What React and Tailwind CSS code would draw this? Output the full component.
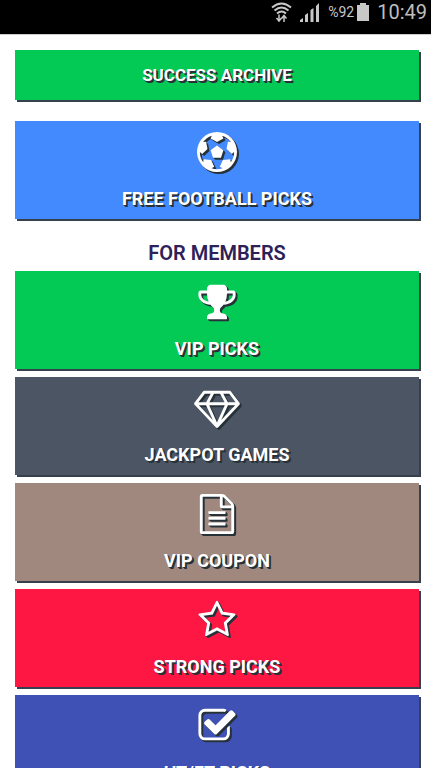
const ICONS = {
  ball: {
    box: '0 0 1792 1792',
    size: 'w-10 h-10',
    d: 'M609 816l287-208 287 208-109 336h-355zm287-816q182 0 348 71t286 191 191 286 71 348-71 348-191 286-286 191-348 71-348-71-286-191-191-286-71-348 71-348 191-286 286-191 348-71zm619 1350q149-203 149-454v-3l-102 89-240-224 63-323 134 12q-150-206-389-282l53 124-287 159-287-159 53-124q-239 76-389 282l135-12 62 323-240 224-102-89v3q0 251 149 454l30-132 326 40 139 298-116 69q117 39 240 39t240-39l-115-69 139-298 326-40z',
  },
  trophy: {
    box: '0 0 1792 1792',
    size: 'w-10 h-10',
    d: 'M522 883q-74-162-74-371h-256v96q0 78 94.5 162t235.5 113zm1078-275v-96h-256q0 209-74 371 141-29 235.5-113t94.5-162zm128-128v128q0 71-41.5 143t-112 130-173 97.5-215.5 44.5q-42 54-95 95-38 34-52.5 72.5t-14.5 89.5q0 54 30.5 91t97.5 37q75 0 133.5 45.5t58.5 114.5v64q0 14-9 23t-23 9h-832q-14 0-23-9t-9-23v-64q0-69 58.5-114.5t133.5-45.5q67 0 97.5-37t30.5-91q0-51-14.5-89.5t-52.5-72.5q-53-41-95-95-113-5-215.5-44.5t-173-97.5-112-130-41.5-143v-128q0-40 28-68t68-28h288v-96q0-66 47-113t113-47h576q66 0 113 47t47 113v96h288q40 0 68 28t28 68z',
  },
  diamond: {
    box: '0 0 2048 1792',
    size: 'w-[46px] h-10',
    d: 'M212 768l623 665-300-665h-323zm812 772l349-772h-698zm-486-900l204-384h-262l-288 384h346zm675 793l623-665h-323zm-530-793h682l-204-384h-274zm827 0h346l-288-384h-262zm141-486l384 512q14 18 13 41.5t-17 40.5l-960 1024q-18 20-47 20t-47-20l-960-1024q-16-17-17-40.5t13-41.5l384-512q18-26 51-26h1152q33 0 51 26z',
  },
  file: {
    box: '0 0 1792 1792',
    size: 'w-10 h-10',
    d: 'M1596 380q28 28 48 76t20 88v1152q0 40-28 68t-68 28h-1344q-40 0-68-28t-28-68v-1600q0-40 28-68t68-28h896q40 0 88 20t76 48zm-444-244v376h376q-10-29-22-41l-313-313q-12-12-41-22zm384 1528v-1024h-416q-40 0-68-28t-28-68v-416h-768v1536h1280zm-1024-864q0-14 9-23t23-9h704q14 0 23 9t9 23v64q0 14-9 23t-23 9h-704q-14 0-23-9t-9-23v-64zm736 224q14 0 23 9t9 23v64q0 14-9 23t-23 9h-704q-14 0-23-9t-9-23v-64q0-14 9-23t23-9h704zm0 256q14 0 23 9t9 23v64q0 14-9 23t-23 9h-704q-14 0-23-9t-9-23v-64q0-14 9-23t23-9h704z',
  },
  star: {
    box: '0 0 1792 1792',
    size: 'w-10 h-10',
    d: 'M1201 1004l306-297-422-62-189-382-189 382-422 62 306 297-73 421 378-199 377 199zm527-357q0 22-26 48l-363 354 86 500q1 7 1 20 0 50-41 50-19 0-40-12l-449-236-449 236q-22 12-40 12-21 0-31.5-14.5t-10.5-35.5q0-6 2-20l86-500-364-354q-25-27-25-48 0-37 56-46l502-73 225-455q19-41 49-41t49 41l225 455 502 73q56 9 56 46z',
  },
  check: {
    box: '0 0 1792 1792',
    size: 'w-10 h-10',
    d: 'M1472 930v318q0 119-84.5 203.5t-203.5 84.5h-832q-119 0-203.5-84.5t-84.5-203.5v-832q0-119 84.5-203.5t203.5-84.5h832q63 0 117 25 15 7 18 23 3 17-9 29l-49 49q-10 10-23 10-3 0-9-2-23-6-45-6h-832q-66 0-113 47t-47 113v832q0 66 47 113t113 47h832q66 0 113-47t47-113v-254q0-13 9-22l64-64q10-10 23-10 6 0 12 3 20 8 20 29zm231-489l-814 814q-24 24-57 24t-57-24l-430-430q-24-24-24-57t24-57l110-110q24-24 57-24t57 24l263 263 647-647q24-24 57-24t57 24l110 110q24 24 24 57t-24 57z',
  },
};

const memberCards = [
  { label: 'VIP PICKS', icon: 'trophy', bg: 'bg-[#03c955]' },
  { label: 'JACKPOT GAMES', icon: 'diamond', bg: 'bg-[#4b5563]' },
  { label: 'VIP COUPON', icon: 'file', bg: 'bg-[#a1887f]' },
  { label: 'STRONG PICKS', icon: 'star', bg: 'bg-[#ff1744]' },
  { label: 'HT/FT PICKS', icon: 'check', bg: 'bg-[#3f51b5]' },
];

const textShadow = '[text-shadow:1px_1px_0_#263238,2px_2px_0_#263238]';
const iconShadow = '[filter:drop-shadow(1px_1px_0_#263238)_drop-shadow(1px_1px_0_#263238)]';

function PickCard({ label, icon, bg }) {
  const { box, size, d } = ICONS[icon];
  return (
    <a
      href="#"
      className={`flex h-[98px] flex-col items-center pt-[11px] text-white shadow-[2px_2px_0_#37414d] ${bg}`}
    >
      <svg viewBox={box} className={`${size} overflow-visible ${iconShadow}`} fill="currentColor" aria-hidden="true">
        <path d={d} />
      </svg>
      <span className={`mt-[15px] text-[18px] leading-6 font-bold ${textShadow}`}>{label}</span>
    </a>
  );
}

function StatusBar() {
  return (
    <header className="flex h-[35px] shrink-0 items-start justify-end border-b border-[#cccccc] bg-black pr-1 text-[#c8c8c8]">
      {/* Wi-Fi */}
      <svg className="mt-[2px] mr-2 h-[21px] w-[21px]" viewBox="0 0 21 21" fill="none" stroke="currentColor" strokeWidth="2" aria-hidden="true">
        <path d="M1 5.5Q10.5-2.5 20 5.5M3.5 8.5Q10.5 2.5 17.5 8.5M6 11.5Q10.5 7.5 15 11.5" />
        <path d="M8 12.5v6M5.500 16L8 19l2.5-3M13 20v-6M10.5 16.5L13 13.5l2.5 3" strokeWidth="1.5" />
      </svg>
      {/* Signal */}
      <svg className="mt-[2px] mr-2 h-5 w-5" viewBox="0 0 20 20" fill="currentColor" aria-hidden="true">
        <path d="M0 20v-2l3-2v4zM5 20v-7l3-2v9zM10.5 20V8l3-2v14zM16 20V4l3-3v19z" />
      </svg>
      <span className="text-[14px] leading-[25px]">%92</span>
      {/* Battery */}
      <svg className="mt-[3px] mr-2 ml-[3px] h-[18px] w-3" viewBox="0 0 12 18" fill="currentColor" aria-hidden="true">
        <path d="M3 0h6v2h3v16H0V2h3z" />
      </svg>
      <time className="text-[20px] leading-[25px] text-[#bdbdbd]">10:49</time>
    </header>
  );
}

export default function App() {
  return (
    <div className="flex h-screen flex-col bg-white font-[Roboto,sans-serif]">
      <StatusBar />
      <main className="flex-1 overflow-y-auto pt-[15px] pr-3 pb-4 pl-[15px] [scrollbar-width:none]">
        <a
          href="#"
          className={`flex h-[50px] items-center justify-center bg-[#03c955] text-[17px] leading-6 font-bold text-white shadow-[2px_2px_0_#37414d] ${textShadow}`}
        >
          SUCCESS ARCHIVE
        </a>
        <div className="mt-[21px]">
          <PickCard label="FREE FOOTBALL PICKS" icon="ball" bg="bg-[#448aff]" />
        </div>
        <h2 className="mt-5 mb-1 text-center text-[20px] leading-7 font-semibold text-[#2e2157]">FOR MEMBERS</h2>
        <div className="grid gap-2">
          {memberCards.map((card) => (
            <PickCard key={card.label} {...card} />
          ))}
        </div>
      </main>
    </div>
  );
}
